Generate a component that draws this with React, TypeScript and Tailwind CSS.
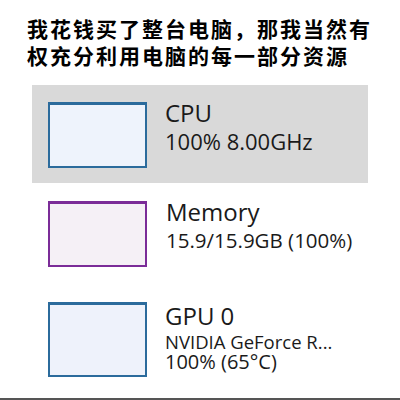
import React from "react";

function Thumb({ border, fill, h }: { border: string; fill: string; h: string }) {
  return <div className={`w-[99px] shrink-0 border-2 border-t-[3px] ${border} ${fill} ${h}`} />;
}

export default function App() {
  return (
    <div
      className="relative w-[400px] h-[400px] overflow-hidden bg-white text-[#1a1a1a]"
      style={{ fontFamily: '"Open Sans", "Noto Sans", sans-serif' }}
    >
      {/* caption */}
      <div
        className="pl-[27px] pt-[15px] text-[21px] leading-[27px] font-bold tracking-[2px] text-black"
        style={{ fontFamily: '"Noto Sans CJK SC", "Noto Sans", sans-serif' }}
      >
        <div>我花钱买了整台电脑，那我当然有</div>
        <div>权充分利用电脑的每一部分资源</div>
      </div>

      {/* CPU (selected) */}
      <div className="mx-[32px] mt-[16px] h-[98px] bg-[#d9d9d9] flex items-start pl-[16px] pt-[17px]">
        <Thumb border="border-[#2b6b9c]" fill="bg-[#eef3fc]" h="h-[66px]" />
        <div className="ml-[18px] -mt-[3px] flex flex-col">
          <div className="text-[24px] leading-[28px]">CPU</div>
          <div className="text-[22px] leading-[28px]">100% 8.00GHz</div>
        </div>
      </div>

      {/* Memory */}
      <div className="mx-[32px] mt-[18px] flex items-start pl-[16px]">
        <Thumb border="border-[#7b2c98]" fill="bg-[#f5f0f6]" h="h-[66px]" />
        <div className="ml-[19px] -mt-[3px] flex flex-col">
          <div className="text-[24px] leading-[28px]">Memory</div>
          <div className="text-[20.5px] leading-[28px]">15.9/15.9GB (100%)</div>
        </div>
      </div>

      {/* GPU */}
      <div className="mx-[32px] mt-[35px] flex items-start pl-[16px]">
        <Thumb border="border-[#2b6b9c]" fill="bg-[#eef2fb]" h="h-[75px]" />
        <div className="ml-[18px] -mt-[3px] flex flex-col">
          <div className="text-[24px] leading-[34px]">GPU 0</div>
          <div className="text-[18.5px] leading-[18px]">NVIDIA GeForce R...</div>
          <div className="text-[20px] leading-[22px]">100% (65°C)</div>
        </div>
      </div>

      <div className="absolute bottom-0 left-0 right-0 h-[2px] bg-[#555555]" />
    </div>
  );
}
